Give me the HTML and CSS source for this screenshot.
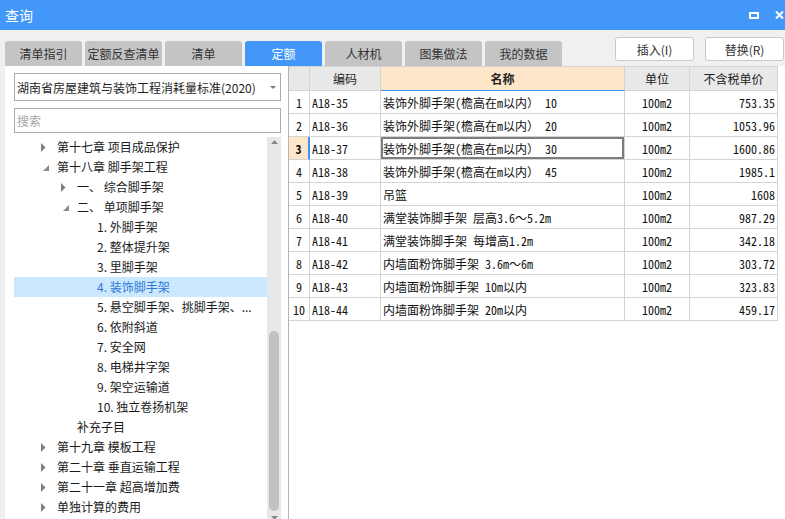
FILE: index.html
```html
<!DOCTYPE html>
<html lang="zh-CN">
<head>
<meta charset="utf-8">
<title>查询</title>
<link rel="stylesheet" href="styles.css">
</head>
<body>
<div class="window">
  <header class="titlebar">
    <span class="title">查询</span>
    <div class="win-ctrls">
      <svg class="ic-max" width="10" height="7" viewBox="0 0 10 7"><rect x="1" y="1" width="8" height="5" fill="none" stroke="#fff" stroke-width="2"/></svg>
      <svg class="ic-close" width="9" height="8" viewBox="0 0 9 8"><path d="M1 0.5 L8 7.5 M8 0.5 L1 7.5" stroke="#fff" stroke-width="2"/></svg>
    </div>
  </header>

  <div class="toolbar">
    <nav class="tabs">
      <div class="tab">清单指引</div>
      <div class="tab">定额反查清单</div>
      <div class="tab">清单</div>
      <div class="tab active">定额</div>
      <div class="tab">人材机</div>
      <div class="tab">图集做法</div>
      <div class="tab">我的数据</div>
    </nav>
    <div class="actions">
      <button class="btn">插入(I)</button>
      <button class="btn">替换(R)</button>
    </div>
  </div>

  <div class="main">
    <aside class="left">
      <div class="select">
        <span>湖南省房屋建筑与装饰工程消耗量标准(2020)</span>
        <svg class="caret" width="6" height="3" viewBox="0 0 6 3"><polygon points="0,0 6,0 3,3" fill="#7a7a7a"/></svg>
      </div>
      <div class="search">搜索</div>
      <div class="tree-wrap">
        <ul class="tree">
          <li class="node lv1"><span class="tw"><svg width="5" height="9" viewBox="0 0 5 9"><polygon points="0,0 4.5,4.5 0,9" fill="#7f7f7f"/></svg></span>第十七章 项目成品保护</li>
          <li class="node lv1"><span class="tw open"><svg width="7" height="7" viewBox="0 0 7 7"><polygon points="6,0 6,6 0,6" fill="#8a8a8a"/></svg></span>第十八章 脚手架工程</li>
          <li class="node lv2"><span class="tw"><svg width="5" height="9" viewBox="0 0 5 9"><polygon points="0,0 4.5,4.5 0,9" fill="#7f7f7f"/></svg></span>一、 综合脚手架</li>
          <li class="node lv2"><span class="tw open"><svg width="7" height="7" viewBox="0 0 7 7"><polygon points="6,0 6,6 0,6" fill="#8a8a8a"/></svg></span>二、 单项脚手架</li>
          <li class="node lv3">1. 外脚手架</li>
          <li class="node lv3">2. 整体提升架</li>
          <li class="node lv3">3. 里脚手架</li>
          <li class="node lv3 selected">4. 装饰脚手架</li>
          <li class="node lv3">5. 悬空脚手架、挑脚手架、...</li>
          <li class="node lv3">6. 依附斜道</li>
          <li class="node lv3">7. 安全网</li>
          <li class="node lv3">8. 电梯井字架</li>
          <li class="node lv3">9. 架空运输道</li>
          <li class="node lv3">10. 独立卷扬机架</li>
          <li class="node lv2 leaf">补充子目</li>
          <li class="node lv1"><span class="tw"><svg width="5" height="9" viewBox="0 0 5 9"><polygon points="0,0 4.5,4.5 0,9" fill="#7f7f7f"/></svg></span>第十九章 模板工程</li>
          <li class="node lv1"><span class="tw"><svg width="5" height="9" viewBox="0 0 5 9"><polygon points="0,0 4.5,4.5 0,9" fill="#7f7f7f"/></svg></span>第二十章 垂直运输工程</li>
          <li class="node lv1"><span class="tw"><svg width="5" height="9" viewBox="0 0 5 9"><polygon points="0,0 4.5,4.5 0,9" fill="#7f7f7f"/></svg></span>第二十一章 超高增加费</li>
          <li class="node lv1"><span class="tw"><svg width="5" height="9" viewBox="0 0 5 9"><polygon points="0,0 4.5,4.5 0,9" fill="#7f7f7f"/></svg></span>单独计算的费用</li>
        </ul>
        <div class="vscroll">
          <svg class="sb-up" width="7" height="4" viewBox="0 0 7 4"><polygon points="0,4 3.5,0 7,4" fill="#8a8a8a"/></svg>
          <div class="sb-thumb"></div>
          <svg class="sb-down" width="7" height="4" viewBox="0 0 7 4"><polygon points="0,0 7,0 3.5,4" fill="#8a8a8a"/></svg>
        </div>
      </div>
    </aside>

    <section class="right">
      <table class="grid">
        <colgroup>
          <col class="c-no"><col class="c-code"><col class="c-name"><col class="c-unit"><col class="c-price">
        </colgroup>
        <thead>
          <tr>
            <th class="h-no"></th>
            <th>编码</th>
            <th class="h-name">名称</th>
            <th>单位</th>
            <th>不含税单价</th>
          </tr>
        </thead>
        <tbody>
          <tr><td class="no">1</td><td class="code">A18-35</td><td class="name">装饰外脚手架(檐高在m以内） 10</td><td class="unit">100m2</td><td class="price">753.35</td></tr>
          <tr><td class="no">2</td><td class="code">A18-36</td><td class="name">装饰外脚手架(檐高在m以内） 20</td><td class="unit">100m2</td><td class="price">1053.96</td></tr>
          <tr><td class="no current">3</td><td class="code">A18-37</td><td class="name focus">装饰外脚手架(檐高在m以内） 30</td><td class="unit">100m2</td><td class="price">1600.86</td></tr>
          <tr><td class="no">4</td><td class="code">A18-38</td><td class="name">装饰外脚手架(檐高在m以内） 45</td><td class="unit">100m2</td><td class="price">1985.1</td></tr>
          <tr><td class="no">5</td><td class="code">A18-39</td><td class="name">吊篮</td><td class="unit">100m2</td><td class="price">1608</td></tr>
          <tr><td class="no">6</td><td class="code">A18-40</td><td class="name">满堂装饰脚手架 层高3.6～5.2m</td><td class="unit">100m2</td><td class="price">987.29</td></tr>
          <tr><td class="no">7</td><td class="code">A18-41</td><td class="name">满堂装饰脚手架 每增高1.2m</td><td class="unit">100m2</td><td class="price">342.18</td></tr>
          <tr><td class="no">8</td><td class="code">A18-42</td><td class="name">内墙面粉饰脚手架 3.6m～6m</td><td class="unit">100m2</td><td class="price">303.72</td></tr>
          <tr><td class="no">9</td><td class="code">A18-43</td><td class="name">内墙面粉饰脚手架 10m以内</td><td class="unit">100m2</td><td class="price">323.83</td></tr>
          <tr><td class="no">10</td><td class="code">A18-44</td><td class="name">内墙面粉饰脚手架 20m以内</td><td class="unit">100m2</td><td class="price">459.17</td></tr>
        </tbody>
      </table>
    </section>
  </div>
</div>
</body>
</html>
```

FILE: styles.css
```css
* {
  box-sizing: border-box;
  margin: 0;
  padding: 0;
}

html, body {
  width: 785px;
  height: 519px;
  overflow: hidden;
}

body {
  background: #f0f0f0;
  font-family: "Noto Sans CJK SC", "Microsoft YaHei", sans-serif;
  font-size: 12px;
  color: #222;
}

.window {
  display: flex;
  flex-direction: column;
  height: 519px;
}

/* title bar */
.titlebar {
  flex: none;
  height: 30px;
  background: #4297f8;
  color: #fff;
  display: flex;
  align-items: center;
  padding: 0 1px 0 5px;
}

.title {
  flex: 1;
  font-size: 14px;
  line-height: 30px;
}

.win-ctrls {
  display: flex;
  align-items: center;
  gap: 16px;
}

.win-ctrls svg {
  display: block;
}

/* tabs + buttons */
.toolbar {
  flex: none;
  height: 36px;
  display: flex;
}

.tabs {
  display: flex;
  gap: 3px;
  align-self: flex-end;
  padding-left: 5px;
}

.tab {
  width: 77px;
  height: 25px;
  line-height: 25px;
  text-align: center;
  background: #c4c4c4;
  border-radius: 3px 3px 0 0;
  color: #333;
  font-size: 12px;
}

.tab.active {
  background: #4297f8;
  color: #fff;
}

.actions {
  margin-left: auto;
  display: flex;
  gap: 11px;
  padding-top: 7px;
  padding-right: 1px;
}

.btn {
  width: 79px;
  height: 24px;
  background: #fff;
  border: 1px solid #c9c9c9;
  border-radius: 3px;
  font-family: inherit;
  font-size: 12px;
  color: #333;
}

/* main */
.main {
  flex: 1;
  display: flex;
  min-height: 0;
}

.left {
  flex: none;
  width: 283px;
  margin-left: 5px;
  background: #fff;
  padding: 7px 7px 0 9px;
  display: flex;
  flex-direction: column;
}

.select {
  flex: none;
  height: 28px;
  border: 1px solid #ababab;
  display: flex;
  align-items: center;
  justify-content: space-between;
  padding: 0 4px 0 2px;
  color: #1e1e1e;
  white-space: nowrap;
}

.caret {
  display: block;
}

.search {
  flex: none;
  margin-top: 7px;
  height: 25px;
  line-height: 23px;
  border: 1px solid #ababab;
  padding-left: 2px;
  color: #a6a6a6;
}

.tree-wrap {
  flex: none;
  margin-top: 4px;
  display: flex;
  height: 386px;
}

.tree {
  list-style: none;
  width: 253px;
}

.node {
  height: 20px;
  line-height: 20px;
  white-space: nowrap;
  overflow: hidden;
  color: #1a1a1a;
}

.lv1 { padding-left: 27px; }
.lv2 { padding-left: 47px; }
.lv2.leaf { padding-left: 63px; }
.lv3 { padding-left: 83px; }

.tw {
  display: inline-block;
  width: 16px;
  vertical-align: top;
  height: 20px;
  position: relative;
}

.tw svg {
  display: block;
  margin-top: 6px;
}

.tw.open svg {
  margin-top: 8px;
  margin-left: 2px;
}

.node.selected {
  background: #cce8ff;
  color: #2f7bd6;
}

.vscroll {
  width: 14px;
  background: #e8e8e8;
  display: flex;
  flex-direction: column;
  align-items: center;
}

.sb-up {
  display: block;
  margin-top: 3px;
  flex: none;
}

.sb-thumb {
  margin-top: auto;
  width: 10px;
  height: 180px;
  background: #c2c2c2;
  border-radius: 5px;
}

.sb-down {
  display: block;
  margin-top: 5px;
  margin-bottom: 3px;
  flex: none;
}

/* right table */
.right {
  flex: 1;
  background: #fff;
  border-left: 1px solid #b5b5b5;
}

.grid {
  border-collapse: separate;
  border-spacing: 0;
  table-layout: fixed;
  width: 489px;
  border-top: 1px solid #d4d4d4;
}

.c-no { width: 21px; }
.c-code { width: 71px; }
.c-name { width: 244px; }
.c-unit { width: 65px; }
.c-price { width: 88px; }

.grid th,
.grid td {
  border-right: 1px solid #d4d4d4;
  border-bottom: 1px solid #d4d4d4;
  white-space: nowrap;
  overflow: hidden;
  padding: 0 2px;
  vertical-align: middle;
}

.grid thead tr {
  height: 24px;
}

.grid tbody tr {
  height: 23px;
}

.grid th {
  background: #e8e8e8;
  font-weight: normal;
  color: #222;
  font-size: 12px;
  text-align: center;
}

.grid th.h-name {
  background: #fde6ca;
  font-weight: bold;
  border-bottom-color: #3f93f2;
}

.grid td {
  font-family: "Noto Sans Mono CJK SC", "Noto Sans CJK SC", monospace;
  font-size: 12px;
  color: #111;
}

.grid td.no {
  text-align: center;
  padding: 0;
}

.grid td.no.current {
  background: #fde6ca;
  border-right: 2px solid #3f93f2;
  font-weight: bold;
}

.grid td.name.focus {
  box-shadow: inset 0 0 0 2px #7d7d7d;
}

.grid td.unit {
  text-align: center;
}

.grid td.price {
  text-align: right;
}
```
